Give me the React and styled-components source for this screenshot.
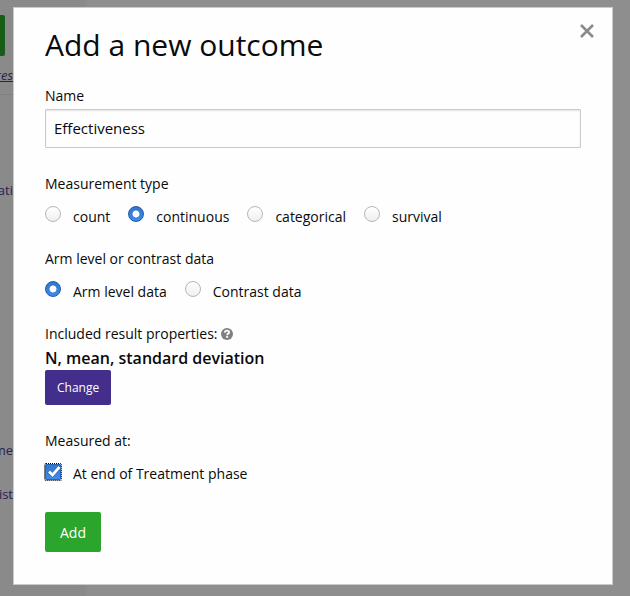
import React, { useState } from "react";
import styled, { createGlobalStyle } from "styled-components";

const GlobalStyle = createGlobalStyle`
  *, *::before, *::after { box-sizing: border-box; }
  html, body, #root { height: 100%; }
  body {
    margin: 0;
    overflow: hidden;
    background: #8e8e8e;
    color: #0a0a0a;
    font-family: "Open Sans", "Noto Sans", sans-serif;
    font-size: 14px;
    line-height: 25px;
  }
`;

const Page = styled.div`
  display: grid;
  grid-template-columns: 86px 1fr;
  min-height: 100vh;
`;

const Sidebar = styled.aside`
  display: flex;
  flex-direction: column;
  align-items: flex-start;
  overflow: hidden;
  background: #8a8a8a;
`;

const PageAction = styled.button`
  width: 5px;
  height: 41px;
  margin-top: 15px;
  padding: 0;
  border: 0;
  border-radius: 0 2px 2px 0;
  background: #175d17;
`;

const SideNote = styled.div`
  display: flex;
  width: 100%;
  height: 39px;
  padding-top: 7px;
  border-bottom: 1px solid #7f7f7f;
`;

const SideLink = styled.a`
  display: flex;
  justify-content: flex-end;
  width: 13px;
  margin-top: ${(p) => p.$gap || 0}px;
  color: #2a1c55;
  font-size: 13px;
  font-style: ${(p) => (p.$italic ? "italic" : "normal")};
  text-decoration: ${(p) => (p.$italic ? "underline" : "none")};
  white-space: nowrap;
`;

const Overlay = styled.div`
  position: fixed;
  inset: 0;
  padding: 7px 17px 11px 13px;
`;

const Dialog = styled.form`
  padding: 20px 31px 32px;
  border: 1px solid #cacaca;
  background: #fefefe;
`;

const DialogHeader = styled.header`
  display: flex;
  justify-content: space-between;
  align-items: flex-start;
  margin-bottom: 21px;
`;

const Title = styled.h3`
  margin: 0;
  font-size: 30px;
  font-weight: 400;
  line-height: 34px;
`;

const CloseButton = styled.button`
  width: 16px;
  height: 16px;
  margin: -5px -14px 0 0;
  padding: 0;
  border: 0;
  background: none;
  color: #8a8a8a;
  svg { display: block; }
`;

const Field = styled.div`
  display: flex;
  flex-direction: column;
  margin-bottom: 23px;
`;

const FieldLabel = styled.label`
  margin-bottom: 1px;
  font-size: 14px;
`;

const TextInput = styled.input`
  width: 100%;
  height: 39px;
  padding: 0 8px 2px;
  border: 1px solid #cacaca;
  border-radius: 1px;
  background: #fefefe;
  box-shadow: inset 0 1px 2px rgba(10, 10, 10, 0.1);
  color: #0a0a0a;
  font: inherit;
  font-size: 15px;
  outline: 0;
`;

const Group = styled.fieldset`
  min-width: 0;
  margin: 0 0 ${(p) => p.$gap || 17}px;
  padding: 0;
  border: 0;
`;

const Legend = styled.legend`
  padding: 0;
  margin-bottom: 8px;
`;

const Options = styled.div`
  display: flex;
  gap: 18px;
`;

const Option = styled.label`
  display: flex;
  align-items: flex-start;
  gap: 12px;
  white-space: nowrap;
`;

const Radio = styled.input`
  appearance: none;
  width: 16px;
  height: 16px;
  margin: 2px 0 0;
  border: 1px solid #bbb5af;
  border-radius: 50%;
  background: linear-gradient(#ffffff, #efefef);
  &:checked {
    border-color: #2059a8;
    background: radial-gradient(circle, #ffffff 0 3px, #2b6fc9 4px, transparent 4px),
      linear-gradient(#3275cc, #3c8bee);
  }
`;

const CheckHolder = styled.span`
  display: grid;
  width: 16px;
  height: 16px;
  margin-top: 3px;
  > * { grid-area: 1 / 1; }
  svg { pointer-events: none; }
`;

const Checkbox = styled.input`
  appearance: none;
  width: 16px;
  height: 16px;
  margin: 0;
  border: 1px solid #2864b4;
  border-radius: 1px;
  background: linear-gradient(#3275cc, #3c8bee);
  outline: 1px dotted #000000;
  & + svg { visibility: hidden; }
  &:checked + svg { visibility: visible; }
`;

const Properties = styled.section`
  margin-bottom: 23px;
`;

const PropertiesLabel = styled.div`
  display: flex;
  align-items: center;
  gap: 3px;
`;

const Summary = styled.strong`
  display: block;
  font-size: 16px;
  font-weight: 600;
  line-height: 24px;
`;

const Button = styled.button`
  display: block;
  height: ${(p) => (p.$small ? 35 : 40)}px;
  padding: 0 ${(p) => (p.$small ? 12 : 15)}px;
  border: 0;
  border-radius: 2px;
  background: ${(p) => (p.$small ? "#432e8b" : "#2ba52b")};
  color: #fefefe;
  font: inherit;
  font-size: ${(p) => (p.$small ? 12 : 14)}px;
`;

function HelpIcon() {
  return (
    <svg width="12" height="12" viewBox="0 0 12 12" role="img" aria-label="Help">
      <circle cx="6" cy="6" r="6" fill="#808080" />
      <path d="M3.8 4.6C3.9 3.2 4.9 2.7 6 2.7s2.1.6 2.1 1.7C8.1 5.6 6.2 5.6 6.2 7.2" fill="none" stroke="#fefefe" strokeWidth="1.8" />
      <path d="M5.2 8h1.9v1.8H5.2z" fill="#fefefe" />
    </svg>
  );
}

function RadioGroup({ legend, name, options, initial }) {
  const [value, setValue] = useState(initial);
  return (
    <Group>
      <Legend>{legend}</Legend>
      <Options>
        {options.map((option) => (
          <Option key={option}>
            <Radio type="radio" name={name} value={option} checked={value === option} onChange={() => setValue(option)} />
            {option}
          </Option>
        ))}
      </Options>
    </Group>
  );
}

export default function App() {
  return (
    <>
      <GlobalStyle />
      <Page>
        <Sidebar>
          <PageAction type="button" aria-label="Page action" />
          <SideNote><SideLink href="#" $italic>res</SideLink></SideNote>
          <SideLink href="#" $gap={83}>ati</SideLink>
          <SideLink href="#" $gap={235}>me</SideLink>
          <SideLink href="#" $gap={19}>ist</SideLink>
        </Sidebar>
      </Page>
      <Overlay>
        <Dialog role="dialog" aria-labelledby="dialog-title" onSubmit={(e) => e.preventDefault()}>
          <DialogHeader>
            <Title id="dialog-title">Add a new outcome</Title>
            <CloseButton type="button" aria-label="Close">
              <svg width="16" height="16" viewBox="0 0 16 16">
                <path d="M2 2l12 12m0-12l-12 12" fill="none" stroke="currentColor" strokeWidth="2.6" />
              </svg>
            </CloseButton>
          </DialogHeader>
          <Field>
            <FieldLabel htmlFor="outcome-name">Name</FieldLabel>
            <TextInput id="outcome-name" type="text" defaultValue="Effectiveness" />
          </Field>
          <RadioGroup legend="Measurement type" name="measurement" initial="continuous" options={["count", "continuous", "categorical", "survival"]} />
          <RadioGroup legend="Arm level or contrast data" name="level" initial="Arm level data" options={["Arm level data", "Contrast data"]} />
          <Properties>
            <PropertiesLabel>Included result properties: <HelpIcon /></PropertiesLabel>
            <Summary>N, mean, standard deviation</Summary>
            <Button type="button" $small>Change</Button>
          </Properties>
          <Group $gap={26}>
            <Legend>Measured at:</Legend>
            <Option>
              <CheckHolder>
                <Checkbox type="checkbox" defaultChecked />
                <svg width="16" height="16" viewBox="0 0 16 16">
                  <path d="M3.5 7.5l4 3.5L15 2.5" fill="none" stroke="#1f58a5" strokeWidth="3.6" />
                  <path d="M4 7.5l3.5 3.5L14.5 3" fill="none" stroke="#fefefe" strokeWidth="2.8" />
                </svg>
              </CheckHolder>
              At end of Treatment phase
            </Option>
          </Group>
          <Button type="submit">Add</Button>
        </Dialog>
      </Overlay>
    </>
  );
}
